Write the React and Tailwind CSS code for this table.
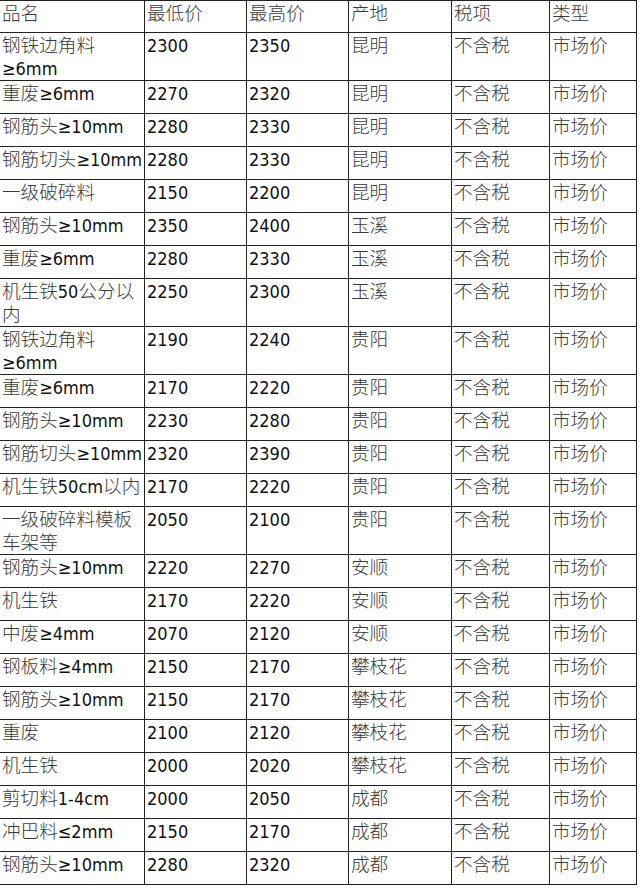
const rows = [
  [['钢铁边角料', '≥6mm'], '2300', '2350', '昆明'],
  [['重废≥6mm'], '2270', '2320', '昆明'],
  [['钢筋头≥10mm'], '2280', '2330', '昆明'],
  [['钢筋切头≥10mm'], '2280', '2330', '昆明'],
  [['一级破碎料'], '2150', '2200', '昆明'],
  [['钢筋头≥10mm'], '2350', '2400', '玉溪'],
  [['重废≥6mm'], '2280', '2330', '玉溪'],
  [['机生铁50公分以', '内'], '2250', '2300', '玉溪'],
  [['钢铁边角料', '≥6mm'], '2190', '2240', '贵阳'],
  [['重废≥6mm'], '2170', '2220', '贵阳'],
  [['钢筋头≥10mm'], '2230', '2280', '贵阳'],
  [['钢筋切头≥10mm'], '2320', '2390', '贵阳'],
  [['机生铁50cm以内'], '2170', '2220', '贵阳'],
  [['一级破碎料模板', '车架等'], '2050', '2100', '贵阳'],
  [['钢筋头≥10mm'], '2220', '2270', '安顺'],
  [['机生铁'], '2170', '2220', '安顺'],
  [['中废≥4mm'], '2070', '2120', '安顺'],
  [['钢板料≥4mm'], '2150', '2170', '攀枝花'],
  [['钢筋头≥10mm'], '2150', '2170', '攀枝花'],
  [['重废'], '2100', '2120', '攀枝花'],
  [['机生铁'], '2000', '2020', '攀枝花'],
  [['剪切料1-4cm'], '2000', '2050', '成都'],
  [['冲巴料≤2mm'], '2150', '2170', '成都'],
  [['钢筋头≥10mm'], '2280', '2320', '成都'],
]

const cols = 'grid grid-cols-[145px_102px_102px_103px_98px_87px]'

// CJK glyphs in the source are a thin song face, so tint them lighter
function Mixed({ text }) {
  const parts = text.split(/([\u4e00-\u9fff]+)/).filter(Boolean)
  return parts.map((p, i) =>
    /[\u4e00-\u9fff]/.test(p)
      ? <span key={i} className="text-[#3a3a3a] text-[18.6px] font-light">{p}</span>
      : <span key={i} className="text-[#111] font-stretch-condensed">{p}</span>
  )
}

function Cell({ lines }) {
  return (
    <div className="border-b border-r border-[#222] pl-[2px] pt-[1px] leading-[23px] whitespace-nowrap">
      {lines.map((l, i) => (
        <div key={i}><Mixed text={l} /></div>
      ))}
    </div>
  )
}

export default function App() {
  return (
    <div
      className="w-[640px] h-[888px] bg-white overflow-hidden text-[18px]"
      style={{ fontFamily: '"DejaVu Sans", "Noto Sans CJK SC", sans-serif' }}
    >
      <div className="border-t border-[#222] w-[637px]">
        {/* Header */}
        <div className={`${cols} h-[32px]`}>
          {['品名', '最低价', '最高价', '产地', '税项', '类型'].map(h => (
            <Cell key={h} lines={[h]} />
          ))}
        </div>

        {rows.map((r, i) => (
          <div key={i} className={`${cols} ${r[0].length > 1 ? 'h-[48px]' : 'h-[33px]'}`}>
            <Cell lines={r[0]} />
            <Cell lines={[r[1]]} />
            <Cell lines={[r[2]]} />
            <Cell lines={[r[3]]} />
            <Cell lines={['不含税']} />
            <Cell lines={['市场价']} />
          </div>
        ))}
      </div>
    </div>
  )
}
